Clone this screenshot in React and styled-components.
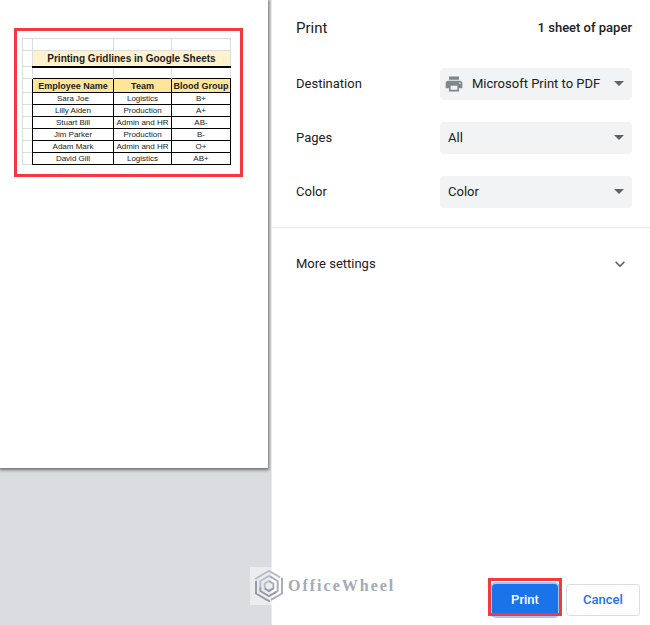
import React, { useState } from "react";
import styled, { createGlobalStyle } from "styled-components";
import { MdPrint, MdExpandMore, MdArrowDropDown } from "react-icons/md";

const employees = [
  { name: "Sara Joe", team: "Logistics", blood: "B+" },
  { name: "Lilly Aiden", team: "Production", blood: "A+" },
  { name: "Stuart Bill", team: "Admin and HR", blood: "AB-" },
  { name: "Jim Parker", team: "Production", blood: "B-" },
  { name: "Adam Mark", team: "Admin and HR", blood: "O+" },
  { name: "David Gill", team: "Logistics", blood: "AB+" },
];

const settings = [
  {
    id: "destination",
    label: "Destination",
    icon: true,
    options: ["Microsoft Print to PDF", "Save as PDF"],
  },
  { id: "pages", label: "Pages", options: ["All", "Custom"] },
  { id: "color", label: "Color", options: ["Color", "Black and white"] },
];

const SheetPreview = () => (
  <Sheet>
    <colgroup>
      <Col $width={10} />
      <Col $width={81} />
      <Col $width={58} />
      <Col $width={59} />
    </colgroup>
    <tbody>
      <Row>
        <Blank />
        <Blank />
        <Blank />
        <Blank />
      </Row>
      <Row $height={16}>
        <Blank />
        <TitleCell colSpan={3}>Printing Gridlines in Google Sheets</TitleCell>
      </Row>
      <Row>
        <Blank />
        <Blank />
        <Blank />
        <Blank />
      </Row>
      <Row $height={14}>
        <Blank />
        <HeadCell>Employee Name</HeadCell>
        <HeadCell>Team</HeadCell>
        <HeadCell>Blood Group</HeadCell>
      </Row>
      {employees.map((person) => (
        <Row key={person.name}>
          <Blank />
          <Cell>{person.name}</Cell>
          <Cell>{person.team}</Cell>
          <Cell>{person.blood}</Cell>
        </Row>
      ))}
    </tbody>
  </Sheet>
);

const SettingRow = ({ id, label, icon, options }) => {
  const [value, setValue] = useState(options[0]);
  return (
    <Setting>
      <Label htmlFor={id}>{label}</Label>
      <SelectBox>
        <Select
          id={id}
          value={value}
          $icon={icon}
          onChange={(event) => setValue(event.target.value)}
        >
          {options.map((option) => (
            <option key={option}>{option}</option>
          ))}
        </Select>
        {icon && <PrinterIcon />}
        <Arrow />
      </SelectBox>
    </Setting>
  );
};

// three identical arms turned around the centre of the hexagon
const Logo = () => (
  <svg width="30" height="34" viewBox="0 0 30 34" fill="none" strokeWidth="2" aria-hidden="true">
    {[
      { angle: 0, color: "#b9bfc8" },
      { angle: 120, color: "#a9b0bb" },
      { angle: 240, color: "#969da9" },
    ].map(({ angle, color }) => (
      <g key={angle} stroke={color} transform={`rotate(${angle} 15 17)`}>
        <path d="M2 10.5V9.5L15 2L26 8.4" />
        <path d="M6.3 20.5V12L15 7L18 8.7" />
        <path d="M10.7 20V14.5L15 12" />
      </g>
    ))}
  </svg>
);

const App = () => {
  const [expanded, setExpanded] = useState(false);
  return (
    <>
      <GlobalStyle />
      <Dialog>
        <Preview>
          <Paper>
            <Marked>
              <SheetPreview />
            </Marked>
          </Paper>
        </Preview>
        <Sidebar>
          <Header>
            <Title>Print</Title>
            <Count>1 sheet of paper</Count>
          </Header>
          <Settings>
            {settings.map((setting) => (
              <SettingRow key={setting.id} {...setting} />
            ))}
          </Settings>
          <More
            type="button"
            aria-expanded={expanded}
            onClick={() => setExpanded(!expanded)}
          >
            <Label as="span">More settings</Label>
            <Chevron $open={expanded} />
          </More>
          <Footer>
            <Watermark>
              <Logo />
              OfficeWheel
            </Watermark>
            <PrintMark>
              <Button type="button" $primary>
                Print
              </Button>
            </PrintMark>
            <Button type="button">Cancel</Button>
          </Footer>
        </Sidebar>
      </Dialog>
    </>
  );
};

export default App;

const GlobalStyle = createGlobalStyle`
  * {
    box-sizing: border-box;
  }
  body {
    margin: 0;
    background-color: #fff;
    color: #202124;
    font-family: Roboto, sans-serif;
    font-size: 13px;
  }
`;

const Dialog = styled.main`
  display: flex;
  min-height: 100vh;
`;

const Preview = styled.section`
  flex: 1;
  min-width: 0;
  padding-right: 3px;
  background-color: #dadce0;
  border-right: 1px solid #e8eaed;
  overflow: hidden;
`;

const Paper = styled.div`
  aspect-ratio: 268 / 468;
  padding: 28px 14px;
  background-color: #fff;
  box-shadow: 0 1px 3px 1px rgba(0, 0, 0, 0.5);
`;

const Marked = styled.div`
  width: fit-content;
  padding: 7px 9px 9px 5px;
  border: 3px solid #f03a3e;
`;

const Sheet = styled.table`
  table-layout: fixed;
  width: 209px;
  border: 1px solid #dcdcdc;
  border-collapse: collapse;
  font-family: "Liberation Sans", sans-serif;
  font-size: 8px;
  line-height: 10px;
  text-align: center;
  white-space: nowrap;
`;

const Col = styled.col`
  width: ${(props) => props.$width}px;
`;

const Row = styled.tr`
  height: ${(props) => props.$height || 12}px;
`;

// only top and left, so the black cell borders win where they meet
const Blank = styled.td`
  padding: 0;
  border-top: 1px solid #dcdcdc;
  border-left: 1px solid #dcdcdc;
`;

const TitleCell = styled.th`
  padding: 2px 0 0;
  background-color: #fff2cc;
  border: 1px solid #dcdcdc;
  border-bottom: 2px solid #000;
  font-size: 10px;
`;

const Cell = styled.td`
  padding: 0;
  border: 1px solid #000;
`;

const HeadCell = styled.th`
  padding: 0;
  background-color: #ffe599;
  border: 1px solid #000;
  font-size: 9px;
`;

const Sidebar = styled.section`
  display: flex;
  flex-direction: column;
  flex: 0 0 378px;
`;

const Header = styled.header`
  display: flex;
  align-items: center;
  justify-content: space-between;
  height: 57px;
  padding: 0 18px 2px 24px;
`;

const Title = styled.h1`
  margin: 0;
  font-size: 15px;
  font-weight: 400;
`;

const Count = styled.span`
  font-weight: 500;
`;

const Settings = styled.div`
  padding: 0 18px 8px 24px;
  border-bottom: 1px solid #e8eaed;
`;

const Setting = styled.div`
  display: flex;
  align-items: center;
  justify-content: space-between;
  height: 54px;
`;

const Label = styled.label`
  padding-bottom: 2px;
`;

const SelectBox = styled.div`
  display: grid;
  align-items: center;
  width: 192px;

  & > * {
    grid-area: 1 / 1;
  }
  & > svg {
    pointer-events: none;
  }
`;

const Select = styled.select`
  appearance: none;
  width: 100%;
  height: 32px;
  padding: 0 24px 2px ${(props) => (props.$icon ? 32 : 8)}px;
  border: 0;
  border-radius: 4px;
  background-color: #f1f3f4;
  color: inherit;
  font: inherit;
`;

const PrinterIcon = styled(MdPrint)`
  margin-left: 4px;
  color: #80868b;
  font-size: 20px;
`;

const Arrow = styled(MdArrowDropDown)`
  justify-self: end;
  margin: 0 1px 2px 0;
  color: #5f6368;
  font-size: 24px;
`;

const More = styled.button`
  display: flex;
  align-items: center;
  justify-content: space-between;
  height: 72px;
  padding: 0 20px 0 24px;
  border: 0;
  background: none;
  color: inherit;
  font: inherit;
`;

const Chevron = styled(MdExpandMore)`
  color: #5f6368;
  font-size: 20px;
  transform: ${(props) => (props.$open ? "rotate(180deg)" : "none")};
`;

const Footer = styled.footer`
  position: relative;
  display: flex;
  justify-content: flex-end;
  gap: 8px;
  margin-top: auto;
  padding: 0 10px 9px;
`;

const Button = styled.button`
  width: ${(props) => (props.$primary ? 66 : 74)}px;
  height: 32px;
  padding: 0 0 2px;
  border: ${(props) => (props.$primary ? "0" : "1px solid #dadce0")};
  border-radius: 4px;
  background-color: ${(props) => (props.$primary ? "#1a73e8" : "#fff")};
  box-shadow: ${(props) => (props.$primary ? "0 0 0 2px #a3c7f6" : "none")};
  color: ${(props) => (props.$primary ? "#fff" : "#1a73e8")};
  font: inherit;
  font-weight: 500;
`;

const PrintMark = styled.div`
  position: relative;

  &::after {
    content: "";
    position: absolute;
    inset: -6px -4px 0;
    border: 3px solid #f03a3e;
    pointer-events: none;
  }
`;

const Watermark = styled.div`
  position: absolute;
  left: -22px;
  bottom: 20px;
  display: flex;
  align-items: center;
  gap: 4px;
  height: 38px;
  padding: 0 2px 0 4px;
  background-color: rgba(255, 255, 255, 0.45);
  color: #a3abb8;
  font-family: "Liberation Serif", serif;
  font-size: 16px;
  font-weight: 700;
  letter-spacing: 2px;
`;
